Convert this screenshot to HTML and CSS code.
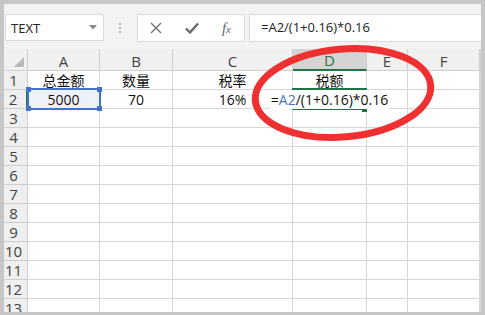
FILE: index.html
```html
<!DOCTYPE html>
<html lang="zh-CN">
<head>
  <meta charset="UTF-8">
  <title>Sheet</title>
  <link rel="stylesheet" href="styles.css">
</head>
<body>
  <div class="window">
    <div class="toolbar">
      <div class="namebox">
        <span>TEXT</span>
        <svg class="drop" width="8" height="5" viewBox="0 0 8 5"><path d="M0 0H8L4 4.5Z" fill="#8a8a8a"/></svg>
      </div>
      <div class="grip"><i></i><i></i><i></i></div>
      <div class="fx-buttons">
        <svg width="12" height="12" viewBox="0 0 12 12"><path d="M1 1L11 11M11 1L1 11" stroke="#707070" stroke-width="1.4" fill="none"/></svg>
        <svg width="14" height="12" viewBox="0 0 14 12"><path d="M1 6.5L5 10.5L13 1.5" stroke="#6a6a6a" stroke-width="2.4" fill="none"/></svg>
        <span class="fx">f<small>x</small></span>
      </div>
      <div class="formula">=A2/(1+0.16)*0.16</div>
    </div>

    <div class="sheet">
      <div class="corner"><svg width="10" height="10" viewBox="0 0 10 10"><path d="M10 0V10H0Z" fill="#b8b8b8"/></svg></div>
      <div class="col">A</div>
      <div class="col">B</div>
      <div class="col">C</div>
      <div class="col active">D</div>
      <div class="col">E</div>
      <div class="col">F</div>
      <div class="col"></div>

      <div class="row">1</div>
      <div class="cell">总金额</div>
      <div class="cell">数量</div>
      <div class="cell">税率</div>
      <div class="cell">税额</div>
      <div class="cell"></div>
      <div class="cell"></div>
      <div class="cell"></div>

      <div class="row active">2</div>
      <div class="cell ref">5000<span class="ref-box"><i class="tl"></i><i class="tr"></i><i class="bl"></i><i class="br"></i></span></div>
      <div class="cell">70</div>
      <div class="cell">16%</div>
      <div class="cell editing"><span class="edit-box"></span><span class="edit-text">=<b>A2</b>/(1+0.16)*0.16</span></div>
      <div class="cell"></div>
      <div class="cell"></div>
      <div class="cell"></div>

      <div class="row">3</div><div class="cell"></div><div class="cell"></div><div class="cell"></div><div class="cell"></div><div class="cell"></div><div class="cell"></div><div class="cell"></div>
      <div class="row">4</div><div class="cell"></div><div class="cell"></div><div class="cell"></div><div class="cell"></div><div class="cell"></div><div class="cell"></div><div class="cell"></div>
      <div class="row">5</div><div class="cell"></div><div class="cell"></div><div class="cell"></div><div class="cell"></div><div class="cell"></div><div class="cell"></div><div class="cell"></div>
      <div class="row">6</div><div class="cell"></div><div class="cell"></div><div class="cell"></div><div class="cell"></div><div class="cell"></div><div class="cell"></div><div class="cell"></div>
      <div class="row">7</div><div class="cell"></div><div class="cell"></div><div class="cell"></div><div class="cell"></div><div class="cell"></div><div class="cell"></div><div class="cell"></div>
      <div class="row">8</div><div class="cell"></div><div class="cell"></div><div class="cell"></div><div class="cell"></div><div class="cell"></div><div class="cell"></div><div class="cell"></div>
      <div class="row">9</div><div class="cell"></div><div class="cell"></div><div class="cell"></div><div class="cell"></div><div class="cell"></div><div class="cell"></div><div class="cell"></div>
      <div class="row">10</div><div class="cell"></div><div class="cell"></div><div class="cell"></div><div class="cell"></div><div class="cell"></div><div class="cell"></div><div class="cell"></div>
      <div class="row">11</div><div class="cell"></div><div class="cell"></div><div class="cell"></div><div class="cell"></div><div class="cell"></div><div class="cell"></div><div class="cell"></div>
      <div class="row">12</div><div class="cell"></div><div class="cell"></div><div class="cell"></div><div class="cell"></div><div class="cell"></div><div class="cell"></div><div class="cell"></div>
      <div class="row">13</div><div class="cell"></div><div class="cell"></div><div class="cell"></div><div class="cell"></div><div class="cell"></div><div class="cell"></div><div class="cell"></div>
    </div>
  </div>

  <svg class="mark" width="485" height="315" viewBox="0 0 485 315">
    <ellipse cx="343" cy="93" rx="88" ry="44" transform="rotate(-5 343 93)" fill="none" stroke="#ef3030" stroke-width="7"/>
  </svg>
</body>
</html>
```

FILE: styles.css
```css
html, body {
  margin: 0;
  height: 100%;
}
body {
  position: relative;
  box-sizing: border-box;
  padding: 4px 4px 3px 4px;
  background-color: #c6c6c6;
  font-family: "Open Sans", "Noto Sans CJK SC", sans-serif;
  overflow: hidden;
}
.window {
  height: 100%;
  display: flex;
  flex-direction: column;
  background-color: #f3f3f3;
  overflow: hidden;
}

/* formula bar */
.toolbar {
  height: 45px;
  flex-shrink: 0;
  display: flex;
  align-items: flex-start;
  padding-top: 10px;
  box-sizing: border-box;
  font-size: 13px;
  color: #222;
}
.namebox {
  margin-left: 1px;
  width: 99px;
  height: 27px;
  box-sizing: border-box;
  background-color: #fff;
  border: 1px solid #dcdcdc;
  display: flex;
  align-items: center;
  justify-content: space-between;
  padding: 0 6px 0 5px;
}
.grip {
  width: 3px;
  margin: 0 15px 0 15px;
  height: 27px;
  display: flex;
  flex-direction: column;
  justify-content: center;
  gap: 2px;
}
.grip i {
  width: 2px;
  height: 2px;
  background-color: #b4b4b4;
}
.fx-buttons {
  width: 108px;
  height: 28px;
  box-sizing: border-box;
  background-color: #fff;
  border: 1px solid #dcdcdc;
  display: flex;
  align-items: center;
  justify-content: space-between;
  padding: 0 13px 0 12px;
}
.fx {
  font-family: "Liberation Serif", serif;
  font-style: italic;
  font-size: 15px;
  color: #666;
}
.fx small {
  font-size: 11px;
}
.formula {
  margin-left: 4px;
  width: 232px;
  height: 28px;
  box-sizing: border-box;
  background-color: #fff;
  border: 1px solid #dcdcdc;
  border-right: none;
  padding-left: 11px;
  line-height: 25px;
}

/* grid */
.sheet {
  flex: 1;
  display: grid;
  grid-template-columns: 24px 72px 73px 120px 74px 41px 72px 1fr;
  grid-template-rows: 22px;
  grid-auto-rows: 19px;
  background-color: #fff;
}
.corner, .col, .row, .cell {
  box-sizing: border-box;
  border-right: 1px solid #d6d6d6;
  border-bottom: 1px solid #d6d6d6;
  display: flex;
  align-items: center;
  justify-content: center;
  white-space: nowrap;
}
.corner {
  background-color: #f0f0f0;
  justify-content: flex-end;
  align-items: flex-end;
  padding: 0 3px 3px 0;
  border-color: #cfcfcf;
}
.col {
  background-color: #f0f0f0;
  border-color: #cfcfcf;
  font-size: 15px;
  color: #444;
  padding-top: 2px;
}
.col.active {
  background-color: #d4d4d4;
  border-bottom: 2px solid #217346;
  color: #217346;
}
.row {
  background-color: #efefef;
  border-color: #cfcfcf;
  font-size: 15px;
  color: #444;
  padding-right: 4px;
}
.row.active {
  border-right: 2px solid #217346;
}
.cell {
  font-size: 14px;
  color: #111;
}

/* reference highlight on A2 */
.ref {
  position: relative;
  background-color: #edf2fa;
}
.ref-box {
  position: absolute;
  top: -2px;
  left: -1px;
  right: -2px;
  bottom: -2px;
  border: 2px solid #4472c4;
}
.ref-box i {
  position: absolute;
  width: 5px;
  height: 5px;
  background-color: #4472c4;
}
.ref-box .tl { top: -3px; left: -3px; }
.ref-box .tr { top: -3px; right: -3px; }
.ref-box .bl { bottom: -3px; left: -3px; }
.ref-box .br { bottom: -3px; right: -3px; }

/* cell being edited */
.editing {
  position: relative;
  z-index: 2;
  overflow: visible;
}
.edit-box {
  position: absolute;
  top: -2px;
  left: -1px;
  right: -1px;
  bottom: -2px;
  border-top: 2px solid #217346;
  border-bottom: 2px solid #217346;
}
.edit-box::after {
  content: "";
  position: absolute;
  right: 0;
  bottom: -4px;
  width: 5px;
  height: 4px;
  background-color: #217346;
}
.edit-text {
  position: relative;
  background-color: #fff;
  font-size: 14px;
  padding: 0 1px;
}
.edit-text b {
  font-weight: normal;
  color: #4472c4;
}

.mark {
  position: absolute;
  top: 0;
  left: 0;
  pointer-events: none;
}
```
